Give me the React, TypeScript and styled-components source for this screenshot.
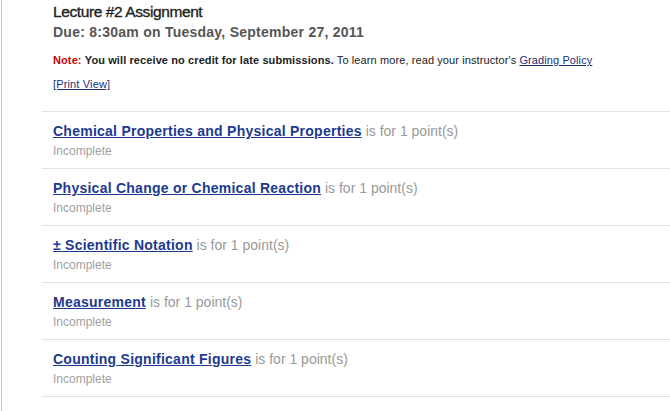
import React from "react";
import styled, { createGlobalStyle } from "styled-components";

const Global = createGlobalStyle`
  html, body { margin: 0; padding: 0; background: #fff; }
  body { font-family: "Liberation Sans", Arial, sans-serif; }
`;

const Frame = styled.div`
  width: 670px;
  height: 411px;
  overflow: hidden;
  border-left: 1px solid #c8c8c8;
  margin-left: 1px;
  box-sizing: border-box;
  background: #fff;
`;

const Header = styled.div`
  padding: 2px 0 0 51px;
`;

const Title = styled.h1`
  margin: 0;
  font-size: 15.5px;
  font-weight: normal;
  color: #222;
  line-height: 20px;
  letter-spacing: -0.4px;
  -webkit-text-stroke: 0.35px #222;
`;

const Due = styled.h2`
  margin: 2px 0 0;
  font-size: 14px;
  font-weight: bold;
  color: #555;
  line-height: 17px;
  letter-spacing: 0.25px;
`;

const Note = styled.p`
  margin: 12px 0 0;
  font-size: 11px;
  line-height: 14px;
  color: #222;
  letter-spacing: 0.1px;
`;

const NoteLabel = styled.b`
  color: #c00;
`;

const Strong = styled.b`
  color: #222;
`;

const SmallLink = styled.a`
  color: #1a2f7a;
  text-decoration: underline;
`;

const PrintLine = styled.p`
  margin: 10px 0 0;
  font-size: 11px;
  line-height: 14px;
  letter-spacing: 0.15px;
`;

const List = styled.div`
  margin: 20px 0 0 40px;
`;

const Row = styled.div`
  border-top: 1px solid #e2e2e2;
  height: 57px;
  padding: 11px 0 0 11px;
  box-sizing: border-box;
`;

const TitleLine = styled.div`
  font-size: 14px;
  line-height: 16px;
  color: #999;
`;

const ItemLink = styled.a`
  color: #1c3a8f;
  font-weight: bold;
  text-decoration: underline;
  letter-spacing: 0.25px;
`;

const Points = styled.span`
  color: #999;
`;

const Status = styled.div`
  margin-top: 5px;
  font-size: 12px;
  line-height: 14px;
  color: #a0a0a0;
`;

const EndRule = styled.div`
  border-top: 1px solid #e2e2e2;
  height: 14px;
`;

const items = [
  "Chemical Properties and Physical Properties",
  "Physical Change or Chemical Reaction",
  "± Scientific Notation",
  "Measurement",
  "Counting Significant Figures",
];

export default function App() {
  return (
    <>
      <Global />
      <Frame>
        <Header>
          <Title>Lecture #2 Assignment</Title>
          <Due>Due: 8:30am on Tuesday, September 27, 2011</Due>
          <Note>
            <NoteLabel>Note:</NoteLabel>{" "}
            <Strong>You will receive no credit for late submissions.</Strong> To
            learn more, read your instructor's{" "}
            <SmallLink href="#">Grading Policy</SmallLink>
          </Note>
          <PrintLine>
            <SmallLink href="#">[Print View]</SmallLink>
          </PrintLine>
        </Header>
        <List>
          {items.map((t) => (
            <Row key={t}>
              <TitleLine>
                <ItemLink href="#">{t}</ItemLink>
                <Points> is for 1 point(s)</Points>
              </TitleLine>
              <Status>Incomplete</Status>
            </Row>
          ))}
          <EndRule />
        </List>
      </Frame>
    </>
  );
}
